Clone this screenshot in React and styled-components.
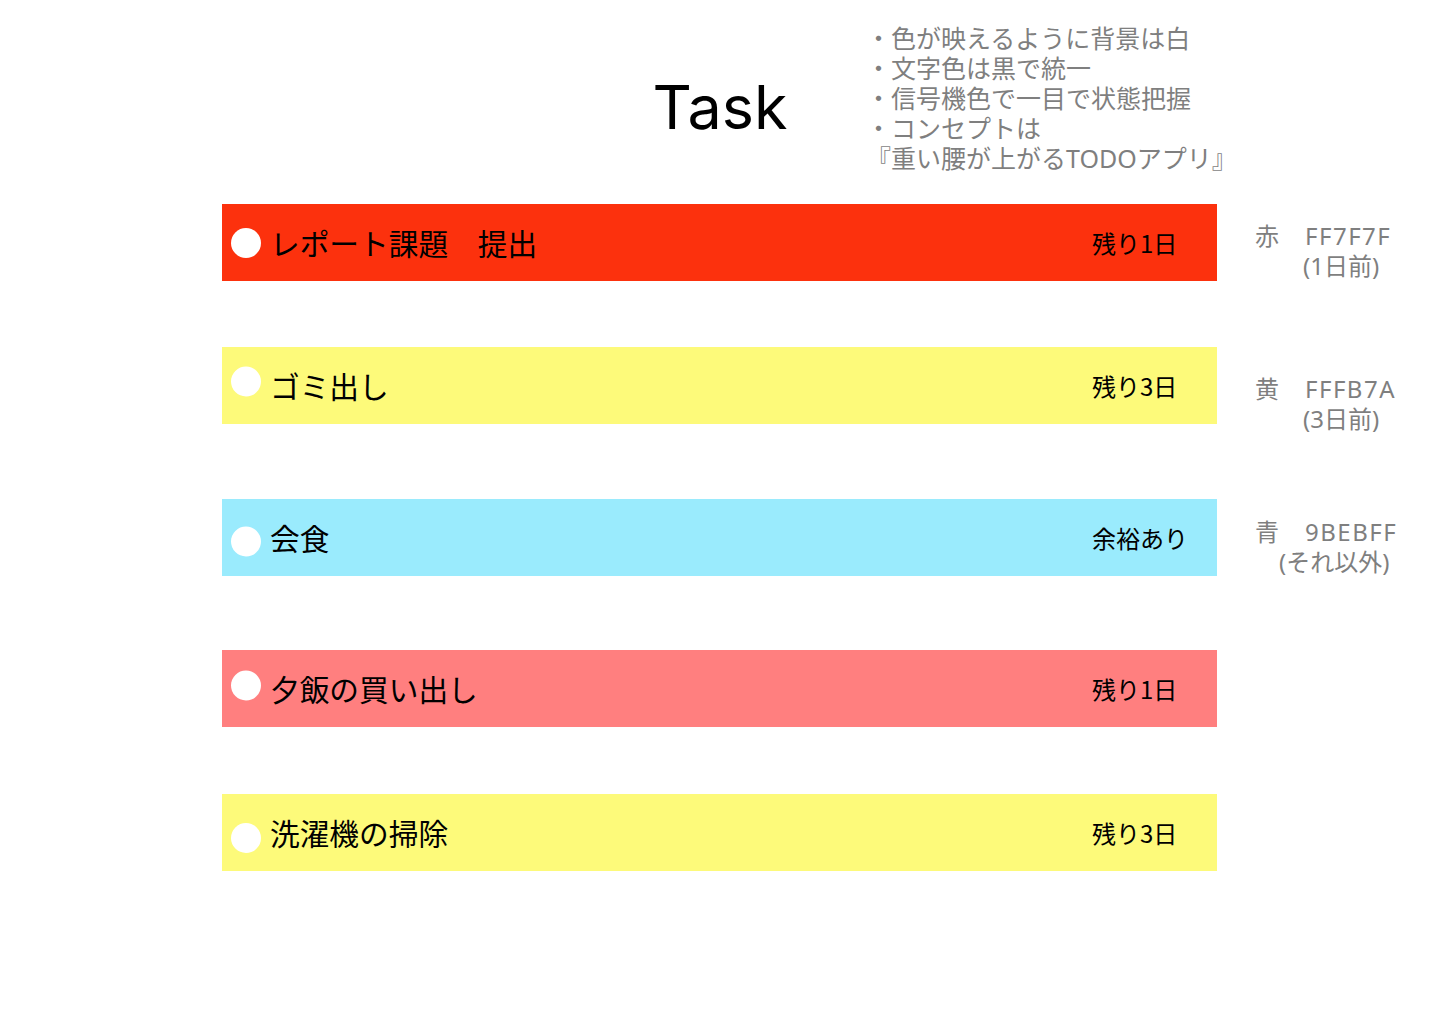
import React from "react";
import styled, { createGlobalStyle } from "styled-components";

const GlobalStyle = createGlobalStyle`
  html, body {
    margin: 0;
    padding: 0;
    background: #ffffff;
  }
  body {
    font-family: "Noto Sans CJK JP", "Noto Sans", sans-serif;
    color: #000000;
  }
`;

const Page = styled.div`
  width: 1440px;
  min-height: 1024px;
  box-sizing: border-box;
  padding-top: 23px;
  background: #ffffff;
`;

const Header = styled.header`
  display: grid;
  grid-template-columns: 1fr 144px 1fr;
  align-items: start;
`;

const Title = styled.h1`
  grid-column: 2;
  margin: 52px 0 0;
  font-family: Inter, "Noto Sans", sans-serif;
  font-weight: 400;
  font-size: 61px;
  line-height: 64px;
  text-align: center;
`;

const Notes = styled.ul`
  grid-column: 3;
  list-style: none;
  margin: 0;
  padding: 0 0 0 74px;
  font-family: "Noto Sans", "Noto Sans CJK JP", sans-serif;
  font-size: 25px;
  line-height: 30px;
  color: #7f7f7f;
  white-space: nowrap;
`;

const Note = styled.li`
  margin: 0;
  height: 30px;
`;

const List = styled.section`
  display: flex;
  flex-direction: column;
  margin-top: 31px;
`;

const Row = styled.div`
  display: flex;
  align-items: flex-start;
  height: 77px;
  margin-top: ${(p) => p.$gap}px;
`;

const Bar = styled.div`
  display: flex;
  align-items: center;
  margin-left: 222px;
  width: 995px;
  height: 77px;
  flex: none;
  box-sizing: border-box;
  padding-left: 9px;
  background: ${(p) => p.$color};
`;

const Check = styled.span`
  flex: none;
  width: 30px;
  height: 30px;
  border-radius: 50%;
  background: #ffffff;
  transform: translateY(${(p) => p.$shift}px);
`;

const TaskName = styled.span`
  flex: 1;
  margin-left: 9px;
  font-size: 29.7px;
  line-height: 40px;
  white-space: pre;
`;

const Due = styled.span`
  flex: none;
  width: 125px;
  font-size: 24px;
  line-height: 30px;
  white-space: nowrap;
`;

const Legend = styled.div`
  flex: none;
  margin-left: 38px;
  margin-top: ${(p) => p.$top}px;
  font-family: "Noto Sans", "Noto Sans CJK JP", sans-serif;
  font-size: 24px;
  line-height: 30px;
  color: #7f7f7f;
  white-space: pre;
`;

const LegendLine = styled.div`
  height: 30px;
  padding-left: ${(p) => p.$indent || 0}em;
`;

const Code = styled.span`
  margin-left: 2px;
  letter-spacing: 1.5px;
`;

const tasks = [
  { name: "レポート課題　提出", due: "残り1日", color: "#fc310d", gap: 0, shift: 0,
    legend: { top: 17, color: "赤", code: "FF7F7F", sub: "(1日前)", indent: 2 } },
  { name: "ゴミ出し", due: "残り3日", color: "#fdfa7a", gap: 66, shift: -4.5,
    legend: { top: 27, color: "黄", code: "FFFB7A", sub: "(3日前)", indent: 2 } },
  { name: "会食", due: "余裕あり", color: "#9aebfd", gap: 75, shift: 3.5,
    legend: { top: 18, color: "青", code: "9BEBFF", sub: "(それ以外)", indent: 1 } },
  { name: "夕飯の買い出し", due: "残り1日", color: "#ff7f7f", gap: 74, shift: -3.5 },
  { name: "洗濯機の掃除", due: "残り3日", color: "#fdfa7a", gap: 67, shift: 5 },
];

export default function App() {
  return (
    <Page>
      <GlobalStyle />
      <Header>
        <Title>Task</Title>
        <Notes>
          <Note>・色が映えるように背景は白</Note>
          <Note>・文字色は黒で統一</Note>
          <Note>・信号機色で一目で状態把握</Note>
          <Note>・コンセプトは</Note>
          <Note>『重い腰が上がるTODOアプリ』</Note>
        </Notes>
      </Header>
      <List>
        {tasks.map((t) => (
          <Row key={t.name} $gap={t.gap}>
            <Bar $color={t.color}>
              <Check $shift={t.shift} />
              <TaskName>{t.name}</TaskName>
              <Due>{t.due}</Due>
            </Bar>
            {t.legend && (
              <Legend $top={t.legend.top}>
                <LegendLine>
                  {t.legend.color}　<Code>{t.legend.code}</Code>
                </LegendLine>
                <LegendLine $indent={t.legend.indent}>{t.legend.sub}</LegendLine>
              </Legend>
            )}
          </Row>
        ))}
      </List>
    </Page>
  );
}
